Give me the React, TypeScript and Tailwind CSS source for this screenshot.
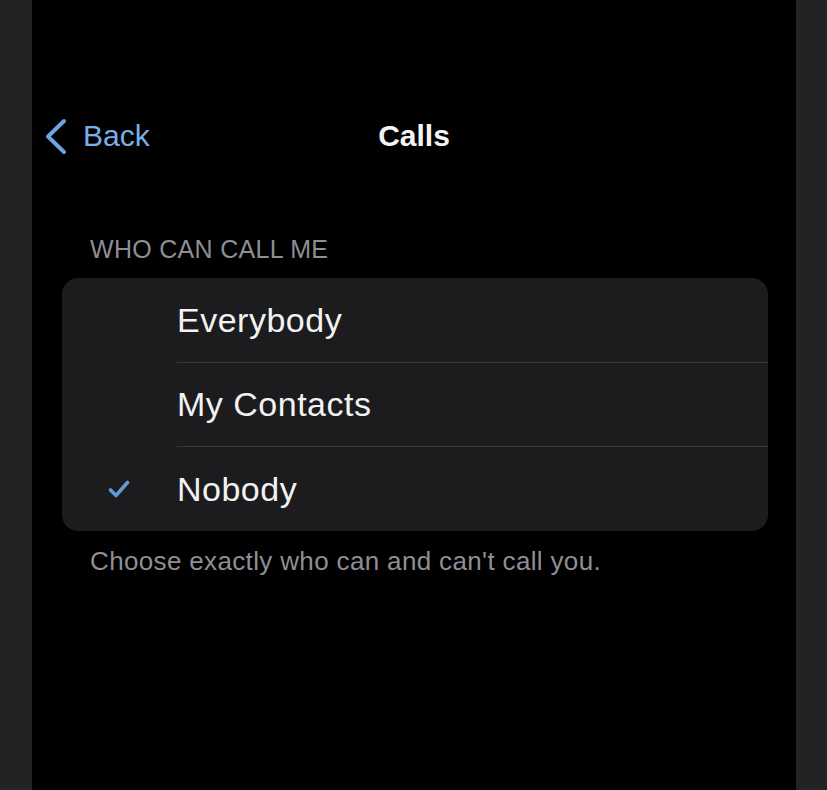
const options = ["Everybody", "My Contacts", "Nobody"];
const selected = "Nobody";

function Chevron() {
  return (
    <svg viewBox="0 0 22 37" className="h-[37px] w-[22px]" fill="none" stroke="#6aa5e2" strokeWidth="4" strokeLinecap="round" strokeLinejoin="round">
      <path d="M19 3 3 18.5 19 34" />
    </svg>
  );
}

function Check() {
  return (
    <svg viewBox="0 0 22 18" className="h-[18px] w-[22px]" fill="none" stroke="#5d9ad6" strokeWidth="3.6" strokeLinecap="round" strokeLinejoin="round">
      <path d="M2.5 10 8 15.5 19.5 2.5" />
    </svg>
  );
}

export default function App() {
  return (
    <div className="flex h-[790px] w-full overflow-hidden bg-black font-['Liberation_Sans',Arial,sans-serif]">
      <div className="w-[32px] shrink-0 bg-[#222325]" />
      <main className="flex-1 bg-black">
        <header className="mt-[116px] grid h-[40px] grid-cols-[1fr_auto_1fr] items-center">
          <a href="#" className="flex items-center pl-[13px] text-[30px] leading-[40px] text-[#7aafe6]">
            <Chevron />
            <span className="ml-[16px]">Back</span>
          </a>
          <h1 className="text-[30px] font-bold leading-[40px] text-[#f4f4f4]">Calls</h1>
          <div />
        </header>

        <p className="ml-[58px] mt-[78px] text-[25px] leading-[30px] tracking-[0.3px] text-[#8e8e93]">WHO CAN CALL ME</p>

        <ul className="ml-[30px] mr-[28px] mt-[14px] overflow-hidden rounded-[16px] bg-[#1c1c1e]">
          {options.map((o, i) => (
            <li key={o} className="flex h-[84px] last:h-[85px]">
              <div className="flex w-[115px] shrink-0 items-center pl-[46px]">
                {o === selected && <Check />}
              </div>
              <div className={`flex flex-1 items-center text-[34px] tracking-[0.5px] text-[#f2f2f2] ${i > 0 ? "border-t border-[#38383a]" : ""}`}>
                {o}
              </div>
            </li>
          ))}
        </ul>

        <p className="ml-[58px] mt-[14px] text-[26px] leading-[32px] tracking-[0.35px] text-[#8e8e93]">
          Choose exactly who can and can&apos;t call you.
        </p>
      </main>
      <div className="w-[31px] shrink-0 bg-[#222325]" />
    </div>
  );
}
